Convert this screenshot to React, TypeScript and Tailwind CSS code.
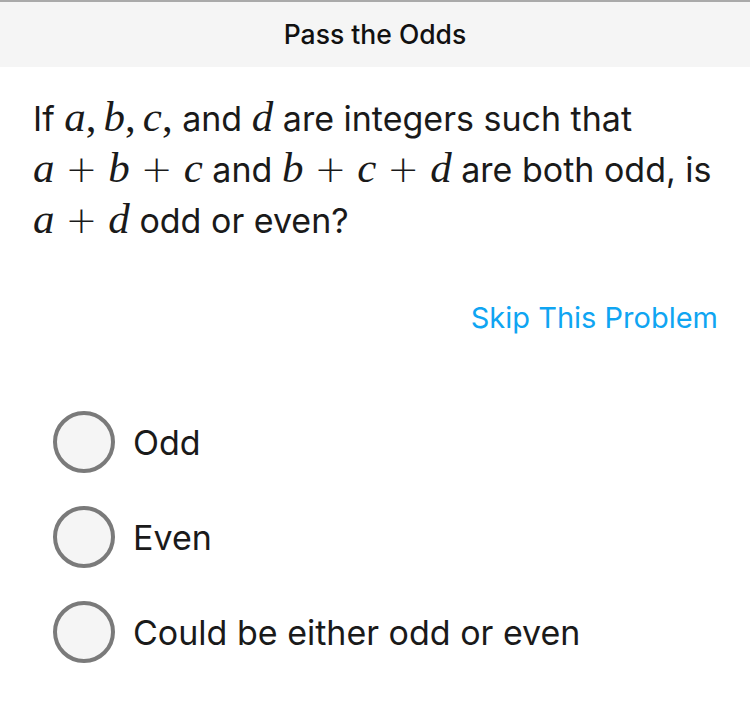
const sans = "font-['Inter','Noto_Sans',sans-serif]";

function V({ children }: { children: React.ReactNode }) {
  return (
    <i className="font-['Liberation_Serif','DejaVu_Serif',serif] text-[43px] leading-none">
      {children}
    </i>
  );
}

function Plus() {
  return (
    <span className="font-['DejaVu_Sans',sans-serif] font-extralight text-[38px] leading-none mx-[11px]">+</span>
  );
}

function Comma({ last }: { last?: boolean }) {
  return (
    <span className={`font-['Liberation_Serif','DejaVu_Serif',serif] text-[43px] leading-none ${last ? "" : "mr-[7px]"}`}>,</span>
  );
}

function Option({ label }: { label: string }) {
  return (
    <div className="flex items-center h-[95px]">
      <div className="w-[62px] h-[62px] rounded-full border-4 border-[#7a7a7a] bg-[#f5f5f5] ml-[53px]" />
      <span className="ml-[18px] text-[34px] text-[#1a1a1a]">{label}</span>
    </div>
  );
}

export default function App() {
  return (
    <div className={`w-[750px] h-[722px] bg-white ${sans}`}>
      {/* header */}
      <div className="h-[67px] bg-[#f5f5f5] border-t-2 border-[#aaaaaa] flex items-center justify-center">
        <span className="text-[26.5px] font-medium text-[#111]">Pass the Odds</span>
      </div>

      {/* question, one div per line as in the reference */}
      <div className="px-[33px] pt-[26px] text-[34px] leading-[51px] text-[#1a1a1a] whitespace-nowrap">
        <div>
          If <V>a</V><Comma /><V>b</V><Comma /><V>c</V><Comma last /> and <V>d</V> are integers such that
        </div>
        <div>
          <V>a</V><Plus /><V>b</V><Plus /><V>c</V> and <V>b</V><Plus /><V>c</V><Plus /><V>d</V> are both odd, is
        </div>
        <div>
          <V>a</V><Plus /><V>d</V> odd or even?
        </div>
      </div>

      <div className="flex justify-end pr-[32px] mt-[50px]">
        <span className="text-[29px] text-[#0fa5f2]">Skip This Problem</span>
      </div>

      <div className="mt-[55px]">
        <Option label="Odd" />
        <Option label="Even" />
        <Option label="Could be either odd or even" />
      </div>
    </div>
  );
}
